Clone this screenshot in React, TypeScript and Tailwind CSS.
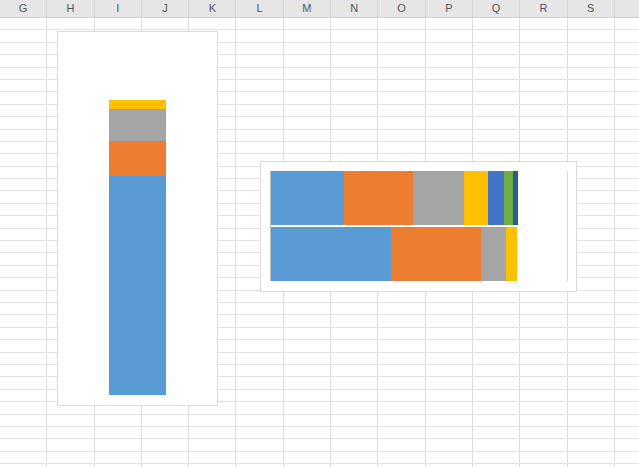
export default function App() {
  const cols = ["G","H","I","J","K","L","M","N","O","P","Q","R","S",""];
  const rows = Array.from({ length: 37 });
  const top = [["#5b9bd5",73],["#ed7d31",69],["#a5a5a5",51],["#ffc000",24],["#4472c4",16],["#70ad47",9],["#255e91",5]] as const;
  const bot = [["#5b9bd5",120],["#ed7d31",90],["#a5a5a5",25],["#ffc000",11]] as const;
  return (
    <div className="relative w-[639px] h-[467px] overflow-hidden bg-white" style={{ fontFamily: "'Liberation Sans', Arial, sans-serif" }}>
      <div className="flex h-[18px] bg-[#e6e6e6] border-b border-[#d0d0d0]">
        {cols.map((c, i) => (
          <div key={i} className="w-[47.3px] shrink-0 border-r border-[#d4d4d4] text-[11px] text-[#555] flex items-center justify-center">{c}</div>
        ))}
      </div>
      <div className="absolute left-0 top-[18px] flex">
        {cols.map((c, i) => (
          <div key={i} className="w-[47.3px] h-[460px] shrink-0 border-r border-[#dcdcdc]" />
        ))}
      </div>
      <div className="absolute left-0 top-[18px] w-full">
        {rows.map((_, i) => (
          <div key={i} className="h-[12.4px] border-b border-[#e2e2e2]" />
        ))}
      </div>
      <div className="absolute left-[57px] top-[31px] w-[161px] h-[375px] bg-white border border-[#d9d9d9]">
        <div className="absolute left-[51px] top-[68px] w-[57px] flex flex-col">
          <div className="h-[9px] bg-[#ffc000]" />
          <div className="h-[32px] bg-[#a5a5a5]" />
          <div className="h-[35px] bg-[#ed7d31]" />
          <div className="h-[219px] bg-[#5b9bd5]" />
        </div>
      </div>
      <div className="absolute left-[260px] top-[161px] w-[317px] h-[131px] bg-white border border-[#d9d9d9]">
        <div className="absolute left-[9px] top-[9px] flex flex-col gap-[2px] border-l border-[#bfbfbf]">
          <div className="flex h-[54px]">
            {top.map(([c, w], i) => <div key={i} style={{ width: w, background: c }} />)}
          </div>
          <div className="flex h-[54px]">
            {bot.map(([c, w], i) => <div key={i} style={{ width: w, background: c }} />)}
          </div>
        </div>
        <div className="absolute left-[306px] top-[9px] w-px h-[110px] bg-[#d9d9d9]" />
      </div>
    </div>
  );
}
